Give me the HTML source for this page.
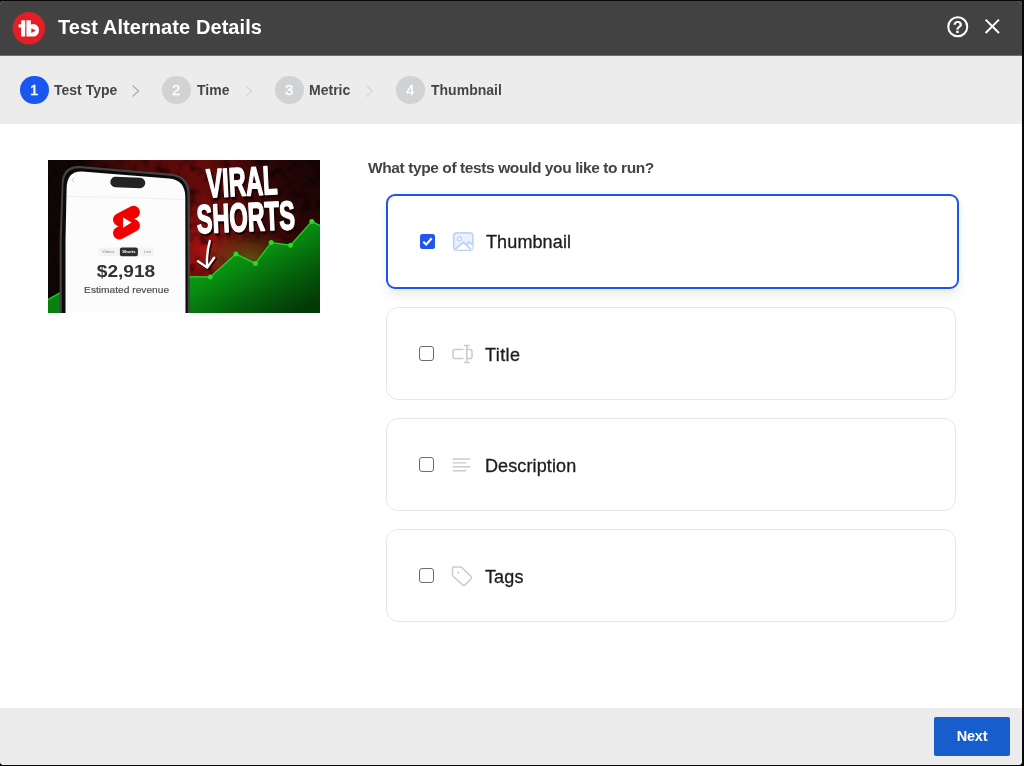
<!DOCTYPE html>
<html lang="en">
<head>
<meta charset="utf-8">
<title>Test Alternate Details</title>
<style>
*{box-sizing:border-box;margin:0;padding:0}
html,body{width:1024px;height:766px;overflow:hidden;background:#0a0806}
body{font-family:"Liberation Sans",sans-serif;position:relative}
.modal{will-change:transform;position:absolute;left:0;top:1px;width:1022px;height:764px;background:#fff;border-radius:4px;overflow:hidden}
.hdr{position:absolute;left:0;top:0;width:100%;height:54px;background:#424242}
.logo{position:absolute;left:12px;top:10px;width:34px;height:34px}
.title{position:absolute;left:58px;top:14px;font-size:20px;line-height:24px;font-weight:bold;color:#fff;white-space:nowrap;letter-spacing:.08px}
.hico{position:absolute;top:15px}
.steps{position:absolute;left:0;top:54px;width:100%;height:69px;background:#ececec;border-top:1px solid #6e6e6e}
.sc{position:absolute;top:19.500px;width:28.500px;height:28.500px;border-radius:50%;background:#d0d2d4;color:#fff;font-size:15px;line-height:28.500px;text-align:center;-webkit-text-stroke:.4px #fff}
.sc.on{background:#1a56f0}
.sl{position:absolute;top:25px;font-size:15px;line-height:18px;font-weight:bold;color:#454545;white-space:nowrap;transform:scaleX(.934);transform-origin:0 0}
.chev{position:absolute;top:28px}
.thumb{position:absolute;left:48px;top:159px}
.q{position:absolute;left:368px;top:157.500px;font-size:15.500px;line-height:18px;font-weight:bold;color:#444;white-space:nowrap;letter-spacing:-.4px}
.card{position:absolute;left:386px;width:570px;height:93px;border:1px solid #e7e7e7;border-radius:12px;background:#fff}
.card.sel{left:386px;width:573px;height:95px;border:2px solid #1a56f0;border-radius:9px;box-shadow:0 6px 10px rgba(0,0,0,.08)}
.cb{position:absolute;left:32px;top:38px;width:15px;height:15px;border:1.5px solid #6b6b6b;border-radius:3px;background:#fff}
.lbl{position:absolute;left:98px;top:35.500px;font-size:18px;line-height:22px;color:#1c1c1c;white-space:nowrap;letter-spacing:.12px;-webkit-text-stroke:.3px #1c1c1c}
.cbon{position:absolute;left:32px;top:38px}
.card.sel .lbl{left:98px;top:35px}
.ico{position:absolute;left:62px;top:35px}
.ftr{position:absolute;left:0;top:707px;width:100%;height:57px;background:#ececec}
.btn{position:absolute;left:934px;top:9px;width:76px;height:39px;background:#175dcb;border-radius:2px;color:#fff;font-weight:bold;font-size:14.5px;line-height:39px;text-align:center;letter-spacing:-.2px}
</style>
</head>
<body>
<div class="modal">
  <div class="hdr">
    <svg class="logo" viewBox="12 11 34 34" width="34" height="34" role="img" aria-label="logo">
      <circle cx="28.9" cy="28.2" r="16.2" fill="#e31f26"/>
      <g fill="#fff">
        <rect x="21.2" y="20.3" width="4" height="16.2" rx=".6"/>
        <rect x="18.6" y="24.2" width="6.6" height="3.4" rx=".5"/>
        <path d="M26.4 20.9q0-.6.6-.6h3.3q.6 0 .6.600v3.7q1.100-.7 2.600-.7a5.500 6.350 0 0 1 0 12.700h-6.500q-.6 0-.6-.6z"/>
      </g>
      <path d="M31.300 28.300l4.500 2.300l-4.500 2.400z" fill="#e31f26"/>
    </svg>
    <div class="title">Test Alternate Details</div>
    <svg class="hico" style="left:946px;top:14px" width="24" height="24" viewBox="946 15 24 24">
      <circle cx="957.75" cy="26.75" r="9.5" fill="none" stroke="#fff" stroke-width="2"/>
      <text x="957.750" y="32.700" text-anchor="middle" font-family="'Liberation Sans',sans-serif" font-weight="bold" font-size="16.500" fill="#fff">?</text>
    </svg>
    <svg class="hico" style="left:983px;top:16px" width="18" height="18" viewBox="983 17 18 18">
      <path d="M985.600 19.600L999 33M999 19.600L985.600 33" stroke="#fff" stroke-width="2" fill="none"/>
    </svg>
  </div>
  <div class="steps">
    <div class="sc on" style="left:20px">1</div><div class="sl" style="left:54px">Test Type</div>
    <svg class="chev" style="left:131px" width="10" height="14" viewBox="0 0 10 14"><path d="M1.500 1.500L7.500 7L1.500 12.500" fill="none" stroke="#b0b2b4" stroke-width="1.400"/></svg>
    <div class="sc" style="left:162px">2</div><div class="sl" style="left:197px">Time</div>
    <svg class="chev" style="left:244px" width="10" height="14" viewBox="0 0 10 14"><path d="M1.500 1.500L7.500 7L1.500 12.500" fill="none" stroke="#d6d8de" stroke-width="1.400"/></svg>
    <div class="sc" style="left:275px">3</div><div class="sl" style="left:309px">Metric</div>
    <svg class="chev" style="left:365px" width="10" height="14" viewBox="0 0 10 14"><path d="M1.500 1.500L7.500 7L1.500 12.500" fill="none" stroke="#d6d8de" stroke-width="1.400"/></svg>
    <div class="sc" style="left:396px">4</div><div class="sl" style="left:431px">Thumbnail</div>
  </div>
  <svg class="thumb" viewBox="48 160 272 153" width="272" height="153">
    <defs>
      <linearGradient id="bgx" x1="0" y1="0" x2="1" y2="0">
        <stop offset="0" stop-color="#0d0705"/><stop offset=".1" stop-color="#140605"/><stop offset=".3" stop-color="#4a0908"/><stop offset=".55" stop-color="#640b0a"/><stop offset=".8" stop-color="#430807"/><stop offset="1" stop-color="#2a0706"/>
      </linearGradient>
      <radialGradient id="rg1" gradientUnits="userSpaceOnUse" cx="203" cy="250" r="62"><stop offset="0" stop-color="#b01212" stop-opacity=".9"/><stop offset=".5" stop-color="#8e0f0f" stop-opacity=".5"/><stop offset="1" stop-color="#8e0f0f" stop-opacity="0"/></radialGradient>
      <radialGradient id="rg2" gradientUnits="userSpaceOnUse" cx="322" cy="158" r="95"><stop offset="0" stop-color="#140404" stop-opacity=".95"/><stop offset=".55" stop-color="#1c0505" stop-opacity=".55"/><stop offset="1" stop-color="#1c0505" stop-opacity="0"/></radialGradient>
      <filter id="tex" x="0" y="0" width="100%" height="100%"><feTurbulence type="fractalNoise" baseFrequency=".09" numOctaves="3" seed="7" result="n"/><feColorMatrix in="n" type="matrix" values="0 0 0 0 0  0 0 0 0 0  0 0 0 0 0  0 0 0 -2.6 1.35"/></filter>
      <linearGradient id="grn" gradientUnits="userSpaceOnUse" x1="232" y1="238" x2="278" y2="322">
        <stop offset="0" stop-color="#0ba213"/><stop offset=".3" stop-color="#088c10"/><stop offset=".65" stop-color="#055f0b"/><stop offset="1" stop-color="#033a07"/>
      </linearGradient>
      <radialGradient id="haze" cx=".5" cy=".5" r=".5"><stop offset="0" stop-color="#5f5a12" stop-opacity=".8"/><stop offset="1" stop-color="#5f5a12" stop-opacity="0"/></radialGradient>
      <filter id="bl1" x="-20%" y="-20%" width="140%" height="140%"><feGaussianBlur stdDeviation="0.35"/></filter>
      <filter id="bl3" x="-20%" y="-50%" width="140%" height="200%"><feGaussianBlur stdDeviation="3"/></filter>
    </defs>
    <rect x="48" y="160" width="272" height="153" fill="#120605"/>
    <rect x="48" y="160" width="272" height="153" fill="url(#bgx)"/>
    <rect x="48" y="160" width="272" height="153" fill="url(#rg1)"/>
    <rect x="48" y="160" width="272" height="153" fill="url(#rg2)"/>
    <rect x="48" y="160" width="272" height="153" fill="#fff" filter="url(#tex)" opacity=".55"/>
    <ellipse cx="250" cy="258" rx="52" ry="26" fill="url(#haze)"/>
    <!-- chart -->
    <path d="M186 276.7L210.3 277L236 253.9L255.4 263.5L271.2 242.6L290.6 245.3L311.8 221.4L320 225.5V313H186Z" fill="url(#grn)"/>
    <path d="M186 276.7L210.3 277L236 253.9L255.4 263.5L271.2 242.6L290.6 245.3L311.8 221.4L320 225.5" fill="none" stroke="#25c92a" stroke-width="1.4" stroke-linejoin="round"/>
    <g fill="#2bd62f"><circle cx="210.3" cy="277" r="2.5"/><circle cx="236" cy="253.9" r="2.5"/><circle cx="255.4" cy="263.5" r="2.5"/><circle cx="271.2" cy="242.6" r="2.5"/><circle cx="290.6" cy="245.3" r="2.5"/><circle cx="311.8" cy="221.4" r="2.5"/></g>
    <path d="M48 299.600L62 291.600V313H48Z" fill="#08820e"/>
    <path d="M48 299.600L62 291.600" stroke="#22c428" stroke-width="1.4" fill="none"/>
    <!-- phone -->
    <path d="M59.6 313L59.6 240L61.6 186Q61.2 165 80 166L171 173.7Q190 175.5 189.7 195L190 313Z" fill="#444"/>
    <path d="M61.8 313L61.8 240L63.4 187Q63.2 167.4 80 168.2L170.5 175.7Q187.6 177.3 187.5 195.5L187.7 313Z" fill="#0b0b0b"/>
    <path d="M65.5 313L65.5 240L66.6 189Q66.6 171 82 171.6L169 178.5Q185.3 180 185.3 197L185.5 313Z" fill="#fcfcfc"/>
    <path d="M67 196.5L130 197.6L184 199.5" stroke="#ececec" stroke-width=".8" fill="none"/>
    <path d="M74.6 177.6L72 180.2L74.6 182.8" stroke="#c4c4c4" stroke-width="1" fill="none"/>
    <rect x="110.3" y="177.3" width="35" height="10.4" rx="5.2" fill="#232323" transform="rotate(2 127.8 182.5)"/>
    <!-- shorts logo -->
    <g transform="translate(126.5 222.6) scale(1.68) translate(-12 -12)" filter="url(#bl1)">
      <path fill="#f20000" d="M17.77 10.32l-1.2-.5L18 9.06c1.84-.96 2.53-3.23 1.56-5.06s-3.24-2.53-5.07-1.56L6 6.94c-1.29.68-2.07 2.04-2 3.49.07 1.42.93 2.67 2.22 3.25.03.01 1.2.5 1.2.5L6 14.93c-1.83.97-2.53 3.24-1.56 5.07.97 1.83 3.24 2.53 5.07 1.56l8.5-4.5c1.29-.68 2.06-2.04 1.99-3.49-.07-1.42-.94-2.68-2.23-3.25z"/>
      <path fill="#fff" d="M10 15.1V8.9L15 12z"/>
    </g>
    <!-- tabs -->
    <rect x="98.5" y="247.5" width="55" height="8.8" rx="2" fill="#f3f3f3"/>
    <rect x="119.9" y="247.5" width="18" height="8.8" rx="2" fill="#2e2e2e"/>
    <g font-family="'Liberation Sans',sans-serif" font-size="4.2" text-anchor="middle" filter="url(#bl1)">
      <text x="108.3" y="253.3" fill="#8a8a8a">Videos</text>
      <text x="128.9" y="253.3" fill="#fff" font-weight="bold">Shorts</text>
      <text x="147.5" y="253.3" fill="#9a9a9a">Live</text>
    </g>
    <text x="126" y="276.8" font-family="'Liberation Sans',sans-serif" font-weight="bold" font-size="17" fill="#303030" text-anchor="middle" textLength="58.4" lengthAdjust="spacingAndGlyphs" filter="url(#bl1)">$2,918</text>
    <text x="126.6" y="292.7" font-family="'Liberation Sans',sans-serif" font-size="9.800" fill="#484848" stroke="#484848" stroke-width=".150" text-anchor="middle" textLength="85" lengthAdjust="spacingAndGlyphs" filter="url(#bl1)">Estimated revenue</text>
    <!-- headline -->
    <g font-family="'Liberation Sans',sans-serif" font-weight="bold" font-size="40.300" stroke-linejoin="round">
      <g transform="translate(207.300 197.500) rotate(-3) scale(.585 1)">
        <text x="2.500" y="2.200" fill="#1d0404" stroke="#1d0404" stroke-width="2.200">VIRAL</text>
        <text x="0" y="0" fill="#fff" stroke="#fff" stroke-width="1.700">VIRAL</text>
      </g>
      <g transform="translate(197.300 233.200) rotate(-2.400) scale(.585 1)">
        <text x="2.500" y="2.200" fill="#1d0404" stroke="#1d0404" stroke-width="2.200">SHORTS</text>
        <text x="0" y="0" fill="#fff" stroke="#fff" stroke-width="1.700">SHORTS</text>
      </g>
    </g>
    <!-- arrow -->
    <g fill="none" stroke-linecap="round" stroke-linejoin="round">
      <path d="M209.8 241Q206.2 254 207.2 267M198 261.2L207.2 267.6L214.2 257.8" stroke="#2a0606" stroke-width="3.600" transform="translate(1 1)"/>
      <path d="M209.8 241Q206.2 254 207.2 267M198 261.2L207.2 267.6L214.2 257.8" stroke="#fff" stroke-width="2.400"/>
    </g>
  </svg>
  <div class="q">What type of tests would you like to run?</div>
  <div class="card sel" style="top:193px">
    <svg class="cbon" width="15" height="15" viewBox="0 0 15 15"><rect width="15" height="15" rx="2.500" fill="#1f57ee"/><path d="M3.300 7.800L6.200 10.600L11.700 4.300" fill="none" stroke="#fff" stroke-width="2.100"/></svg>
    <svg class="ico" style="left:63px;top:35px" width="24" height="22" viewBox="451 231 24 22">
      <rect x="453.700" y="232.900" width="19.100" height="17.300" rx="3" fill="#ecf2fd" stroke="#bfd4f3" stroke-width="1.700"/>
      <path d="M455 249.500L463.200 242.300L466.300 245.200L469.200 241.800L472.500 245V249.500Z" fill="#fff"/>
      <path d="M455.300 249.300L463.200 242.300L471 249.300M466.300 245.200L469.200 241.800L472.600 245.200" fill="none" stroke="#bfd4f3" stroke-width="1.900" stroke-linejoin="round"/>
      <circle cx="459.500" cy="238.700" r="2" fill="#fff" stroke="#bfd4f3" stroke-width="1.500"/>
    </svg>
    <div class="lbl">Thumbnail</div>
  </div>
  <div class="card" style="top:306px"><div class="cb"></div>
    <svg class="ico" style="left:63px;top:35px" width="24" height="22" viewBox="450 343 24 22"><g fill="none" stroke="#c6ccd2" stroke-width="1.500">
      <path d="M463.500 349.400H455.200Q453 349.400 453 351.600V356.400Q453 358.600 455.200 358.600H463.500M466.800 349.400H469.800Q472 349.400 472 351.600V356.400Q472 358.600 469.800 358.600H466.800M466.800 345.500V362.600M463.900 345.500H469.700M463.900 362.600H469.700"/></g></svg>
    <div class="lbl" style="letter-spacing:.4px">Title</div></div>
  <div class="card" style="top:417px"><div class="cb"></div>
    <svg class="ico" style="left:63px;top:35px" width="24" height="22" viewBox="450 454 24 22"><path d="M452.700 459H470.300M452.700 462.900H466.400M452.700 466.800H470.300M452.700 470.700H466.400" fill="none" stroke="#c6ccd2" stroke-width="1.400"/></svg>
    <div class="lbl">Description</div></div>
  <div class="card" style="top:528px"><div class="cb"></div>
    <svg class="ico" style="left:63px;top:35px" width="24" height="22" viewBox="450 565 24 22"><path d="M454 567.100H460.700Q461.500 567.100 462.100 567.700L470.800 576.300Q472.200 577.700 470.800 579.100L465.300 584.600Q463.900 586 462.500 584.600L453.100 576.300Q452.500 575.700 452.500 574.900V568.600Q452.500 567.100 454 567.100Z" fill="none" stroke="#c6ccd2" stroke-width="1.500"/><circle cx="458.200" cy="572.600" r="1.100" fill="#c6ccd2"/></svg>
    <div class="lbl">Tags</div></div>
  <div class="ftr"><div class="btn">Next</div></div>
</div>
</body>
</html>
